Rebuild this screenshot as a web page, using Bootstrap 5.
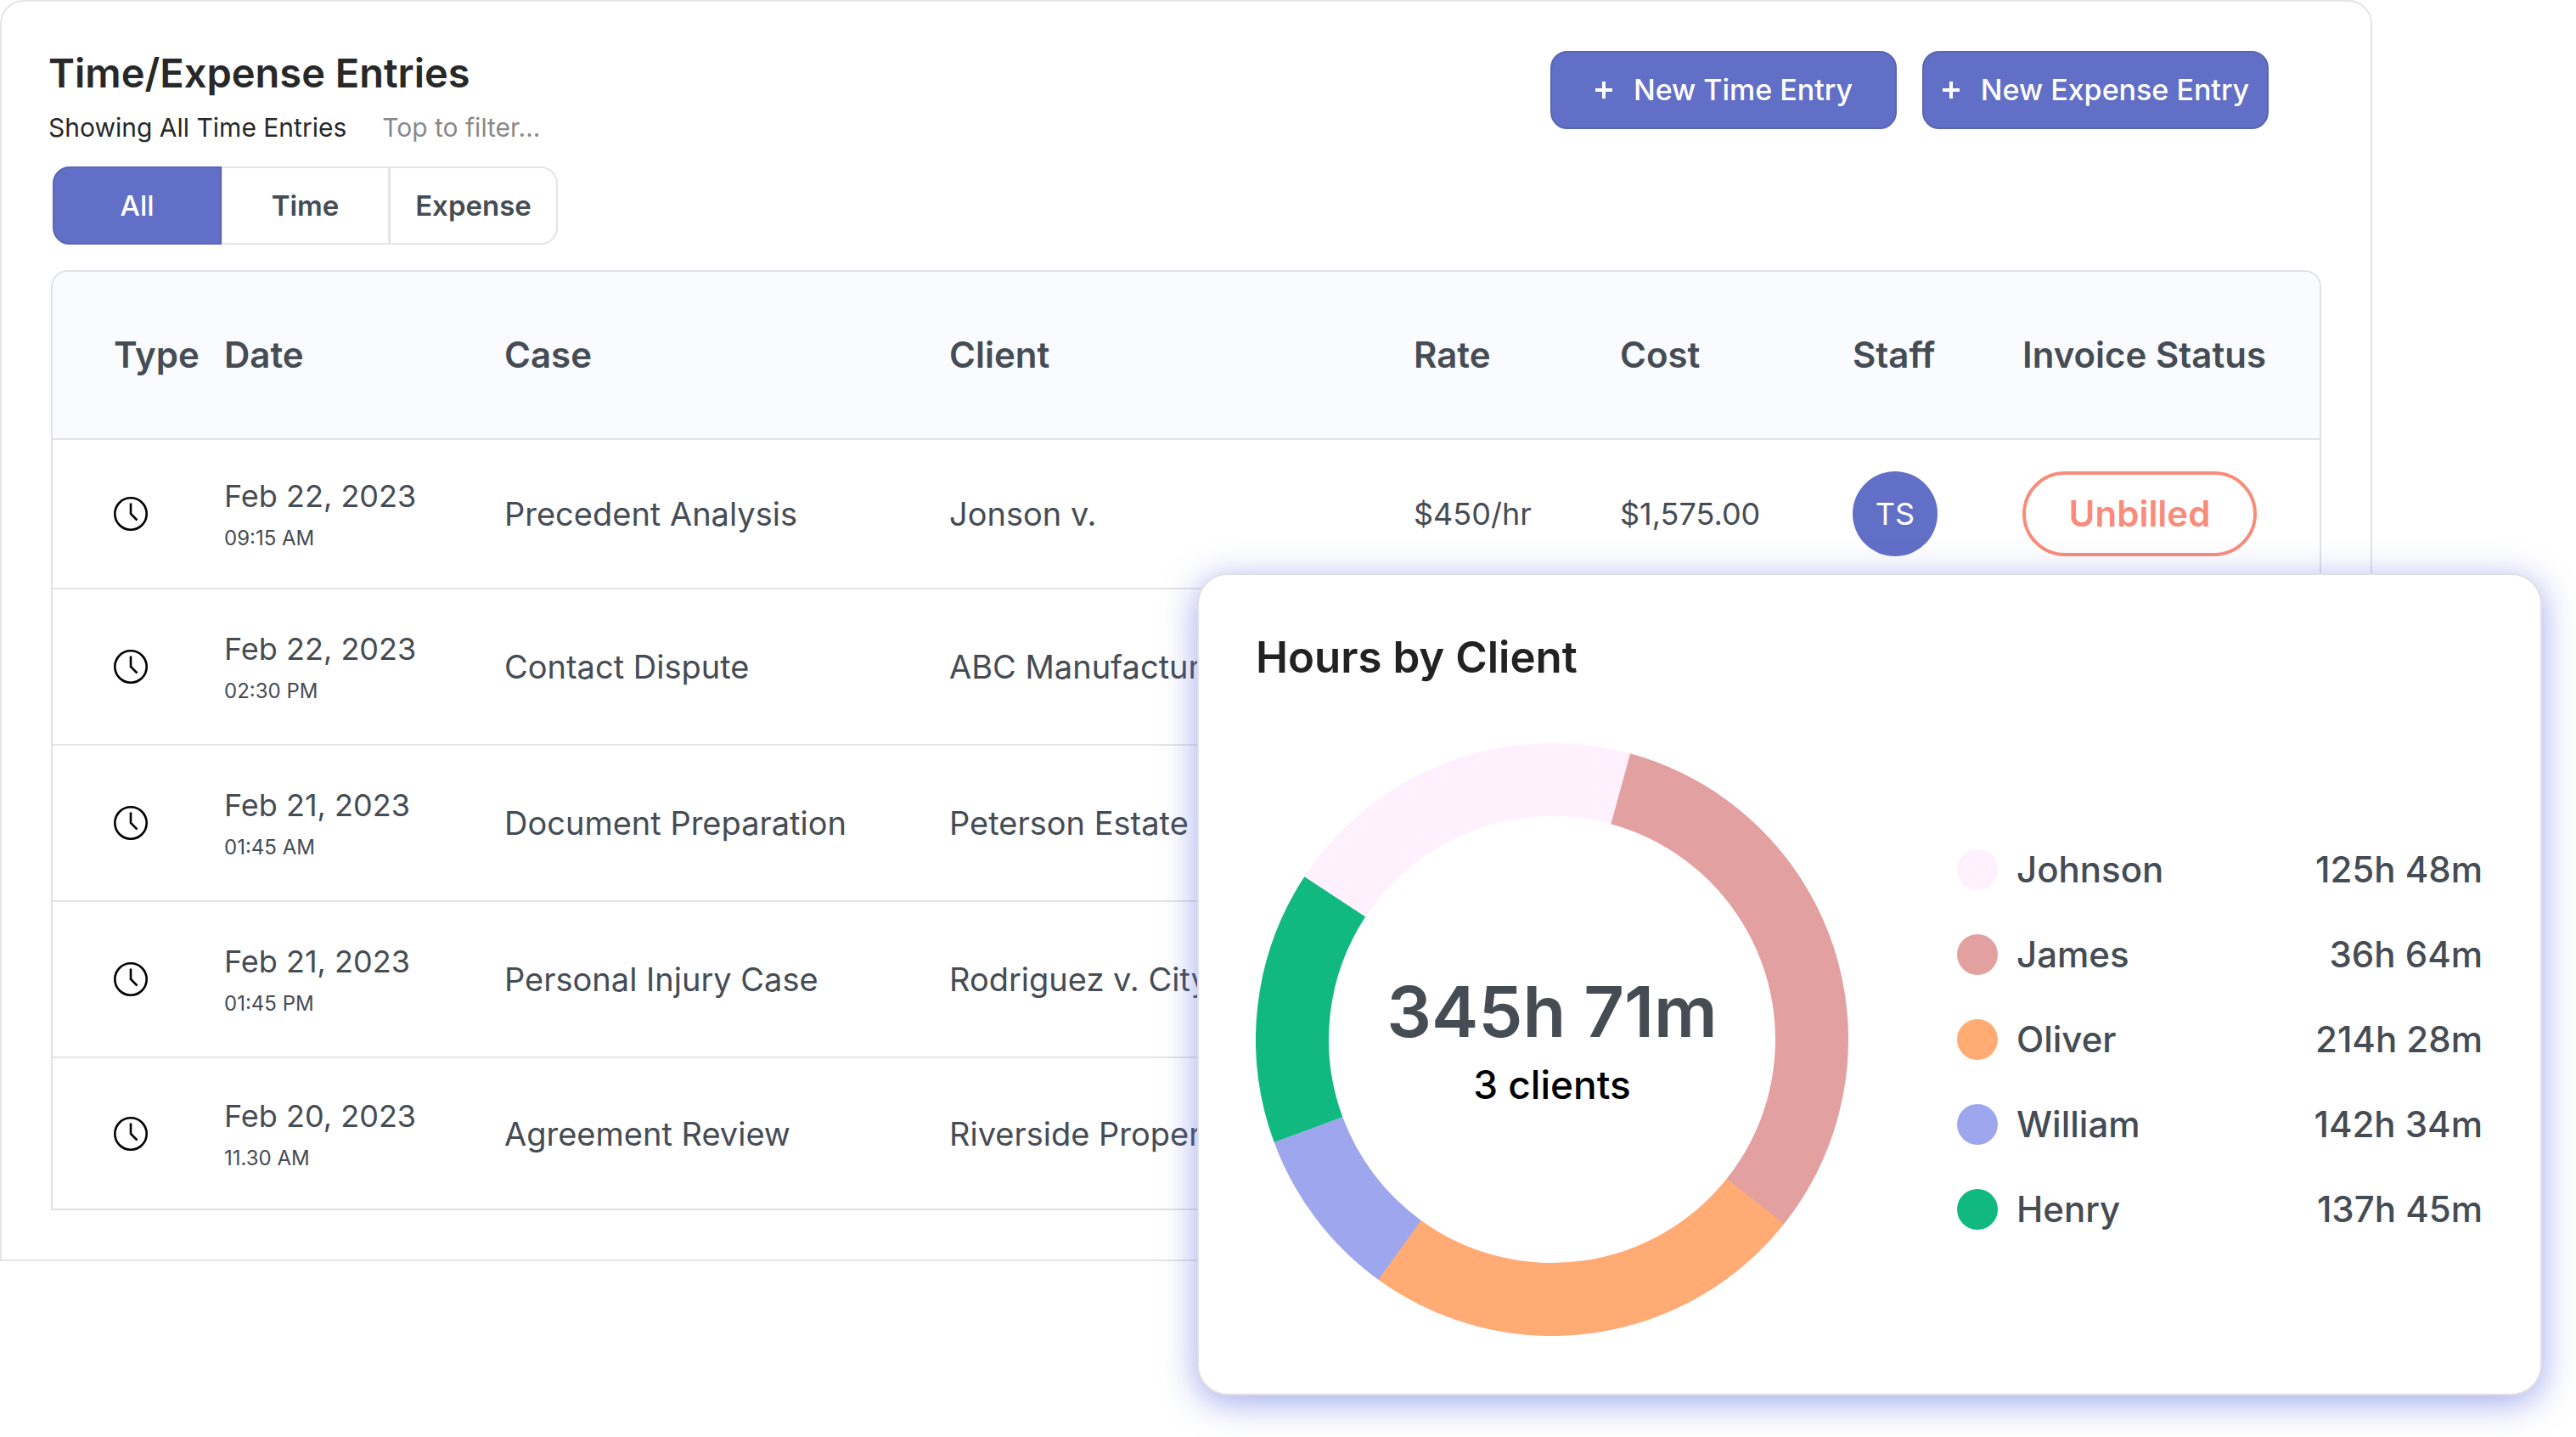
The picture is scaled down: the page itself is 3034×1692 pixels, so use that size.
<!DOCTYPE html>
<html lang="en">
<head>
<meta charset="utf-8">
<meta name="viewport" content="width=device-width, initial-scale=1">
<title>Time/Expense Entries</title>
<link href="https://cdn.jsdelivr.net/npm/bootstrap@5.3.0/dist/css/bootstrap.min.css" rel="stylesheet">
<style>
  :root { --brand: #626fc6; --brand-edge: #5866b4; --ink: #454c54; --line: #e4e4e6; }
  body { font-family: Inter, "Open Sans", sans-serif; color: var(--ink); background: #fff; font-size: 38px; line-height: 48px; }
  .stage { padding-right: 240px; min-height: 100vh; }
  .entries { border: 2px solid var(--line); border-radius: 28px 28px 0 0; padding: 58px 58px 58px 55px; }
  .entries-title { font-size: 47px; line-height: 52px; font-weight: 600; color: #282828; }
  .entries-sub { font-size: 30px; line-height: 36px; color: #282828; gap: 42px; }
  .entries-sub a { color: #888; }
  .entries-actions { gap: 30px; margin-right: 62px; }
  .btn { --bs-btn-font-size: 34px; --bs-btn-line-height: 48px; --bs-btn-font-weight: 500; --bs-btn-border-width: 2px; --bs-btn-border-radius: 20px; --bs-btn-padding-x: 0; --bs-btn-padding-y: 20px; }
  .btn-brand { --bs-btn-color: #fff; --bs-btn-bg: var(--brand); --bs-btn-border-color: var(--brand-edge); --bs-btn-hover-color: #fff; --bs-btn-hover-bg: #5563bd; width: 408px; gap: 24px; }
  .filter { margin: 28px 0 30px 5px; }
  .filter .btn { --bs-btn-font-size: 33px; --bs-btn-font-weight: 600; --bs-btn-color: var(--ink); --bs-btn-border-color: var(--line); --bs-btn-active-color: #fff; --bs-btn-active-bg: var(--brand); --bs-btn-active-border-color: var(--brand-edge); width: 199px; flex: none; }
  .filter .btn.active { font-weight: 500; }
  .grid-box { border: 2px solid #e0e1e6; border-radius: 20px 20px 0 0; overflow: hidden; margin-left: 3px; }
  .entries-table { table-layout: fixed; color: var(--ink); --bs-table-bg: transparent; }
  .entries-table > :not(caption) > * > * { padding: 0; border-bottom: 2px solid var(--line); color: var(--ink); white-space: nowrap; height: 184px; }
  .entries-table > thead > tr > th { height: 197px; font-size: 42px; font-weight: 600; background: #fafbff; vertical-align: middle; }
  .entries-table > tbody > tr:first-child > * { height: 176px; }
  .entries-table > tbody > tr:last-child > * { border-bottom: 0; height: 178px; }
  .entries-table > :not(caption) > tr > :first-child { padding-left: 72px; }
  .c-type { width: 202px; } .c-date { width: 330px; } .c-case { width: 524px; } .c-rate { width: 243px; }
  .c-cost { width: 274px; } .c-staff { width: 200px; } .c-inv { width: 350px; }
  .figures { font-size: 36px; }
  .entry-time { font-size: 24px; line-height: 32px; margin-top: 10px; }
  .clock { width: 40px; height: 40px; display: block; }
  .avatar { width: 100px; height: 100px; background: var(--brand); color: #fff; font-size: 36px; }
  .pill { width: 276px; height: 100px; border: 4px solid #fa8b79; color: #fa8b79; font-size: 42px; font-weight: 600; }
  .hours { top: 675px; right: 40px; width: 1584px; border: 2px solid #e0e0e4; border-radius: 36px; background: #fff; box-shadow: 0 8px 40px rgba(95, 112, 225, .6); padding: 66px 68px 68px 67px; }
  .hours-title { font-size: 51px; line-height: 62px; font-weight: 600; color: #222; margin-bottom: 70px; }
  .donut { width: 698px; height: 698px; }
  .donut svg { display: block; }
  .donut-total { font-size: 83px; line-height: 96px; font-weight: 600; }
  .donut-note { font-size: 46px; line-height: 56px; font-weight: 500; color: #000; margin-top: 10px; }
  .legend-list { width: 619px; gap: 52px; font-size: 42px; font-weight: 500; }
  .legend-dot { width: 48px; height: 48px; margin-right: 22px; }
</style>
</head>
<body>
<div class="stage position-relative">
  <main class="entries">
    <header class="d-flex justify-content-between align-items-start">
      <div>
        <h1 class="entries-title mb-0">Time/Expense Entries</h1>
        <p class="entries-sub d-flex mb-0 mt-3 pt-1"><span>Showing All Time Entries</span><a href="#" class="text-decoration-none">Top to filter...</a></p>
      </div>
      <div class="entries-actions d-flex">
        <button type="button" class="btn btn-brand d-flex justify-content-center align-items-center">
          <svg width="22" height="22" viewBox="0 0 22 22" aria-hidden="true"><path d="M11 1v20M1 11h20" stroke="#fff" stroke-width="4" fill="none"/></svg>
          <span>New Time Entry</span></button>
        <button type="button" class="btn btn-brand d-flex justify-content-center align-items-center">
          <svg width="22" height="22" viewBox="0 0 22 22" aria-hidden="true"><path d="M11 1v20M1 11h20" stroke="#fff" stroke-width="4" fill="none"/></svg>
          <span>New Expense Entry</span></button>
      </div>
    </header>
    <div class="filter btn-group" role="group" aria-label="Entry type">
      <button type="button" class="btn active">All</button>
      <button type="button" class="btn">Time</button>
      <button type="button" class="btn">Expense</button>
    </div>
    <div class="grid-box">
      <table class="table entries-table align-middle mb-0">
        <colgroup><col class="c-type"><col class="c-date"><col class="c-case"><col><col class="c-rate"><col class="c-cost"><col class="c-staff"><col class="c-inv"></colgroup>
        <thead><tr><th>Type</th><th>Date</th><th>Case</th><th>Client</th><th>Rate</th><th>Cost</th><th>Staff</th><th>Invoice Status</th></tr></thead>
        <tbody>
          <tr><td><svg class="clock" viewBox="0 0 40 40" fill="none" stroke="#000" stroke-width="2.6" aria-label="Time"><circle cx="20" cy="20" r="18.7"/><path d="M20 7.500v12.500l7.500 7.500"/></svg></td><td><div class="figures">Feb 22, 2023</div><div class="entry-time">09:15 AM</div></td><td>Precedent Analysis</td><td>Jonson v.</td><td class="figures">$450/hr</td><td class="figures">$1,575.00</td><td><span class="avatar rounded-circle d-flex align-items-center justify-content-center">TS</span></td><td><span class="pill rounded-pill d-flex align-items-center justify-content-center">Unbilled</span></td></tr>
          <tr><td><svg class="clock" viewBox="0 0 40 40" fill="none" stroke="#000" stroke-width="2.6" aria-label="Time"><circle cx="20" cy="20" r="18.7"/><path d="M20 7.500v12.500l7.500 7.500"/></svg></td><td><div class="figures">Feb 22, 2023</div><div class="entry-time">02:30 PM</div></td><td>Contact Dispute</td><td>ABC Manufactur</td><td></td><td></td><td></td><td></td></tr>
          <tr><td><svg class="clock" viewBox="0 0 40 40" fill="none" stroke="#000" stroke-width="2.6" aria-label="Time"><circle cx="20" cy="20" r="18.7"/><path d="M20 7.500v12.500l7.500 7.500"/></svg></td><td><div class="figures">Feb 21, 2023</div><div class="entry-time">01:45 AM</div></td><td>Document Preparation</td><td>Peterson Estate</td><td></td><td></td><td></td><td></td></tr>
          <tr><td><svg class="clock" viewBox="0 0 40 40" fill="none" stroke="#000" stroke-width="2.6" aria-label="Time"><circle cx="20" cy="20" r="18.7"/><path d="M20 7.500v12.500l7.500 7.500"/></svg></td><td><div class="figures">Feb 21, 2023</div><div class="entry-time">01:45 PM</div></td><td>Personal Injury Case</td><td>Rodriguez v. City</td><td></td><td></td><td></td><td></td></tr>
          <tr><td><svg class="clock" viewBox="0 0 40 40" fill="none" stroke="#000" stroke-width="2.6" aria-label="Time"><circle cx="20" cy="20" r="18.7"/><path d="M20 7.500v12.500l7.500 7.500"/></svg></td><td><div class="figures">Feb 20, 2023</div><div class="entry-time">11.30 AM</div></td><td>Agreement Review</td><td>Riverside Proper</td><td></td><td></td><td></td><td></td></tr>
        </tbody>
      </table>
    </div>
  </main>

  <section class="hours position-absolute">
    <h2 class="hours-title">Hours by Client</h2>
    <div class="d-flex justify-content-between align-items-center">
      <div class="donut position-relative">
        <!-- ring segments, clockwise from the top; pathLength 360 makes each dash a number of degrees -->
        <svg width="698" height="698" viewBox="-349 -349 698 698" aria-hidden="true">
          <g fill="none" stroke-width="86" transform="rotate(-90)">
            <circle r="306" pathLength="360" stroke="#fff0fe"/>
            <circle r="306" pathLength="360" stroke="#e3a0a1" stroke-dasharray="113.3 246.7" transform="rotate(15.3)"/>
            <circle r="306" pathLength="360" stroke="#ffab73" stroke-dasharray="87.5 272.5" transform="rotate(128.5)"/>
            <circle r="306" pathLength="360" stroke="#9ea7ed" stroke-dasharray="33.8 326.2" transform="rotate(215.9)"/>
            <circle r="306" pathLength="360" stroke="#11b981" stroke-dasharray="53.6 306.4" transform="rotate(249.7)"/>
          </g>
        </svg>
        <div class="position-absolute top-0 start-0 w-100 h-100 d-flex flex-column align-items-center justify-content-center">
          <div class="donut-total">345h 71m</div>
          <div class="donut-note">3 clients</div>
        </div>
      </div>
      <ul class="legend-list list-unstyled d-flex flex-column mb-0">
        <li class="d-flex align-items-center"><span class="legend-dot rounded-circle" style="background:#fff0fe"></span><span>Johnson</span><span class="ms-auto">125h 48m</span></li>
        <li class="d-flex align-items-center"><span class="legend-dot rounded-circle" style="background:#e3a0a1"></span><span>James</span><span class="ms-auto">36h 64m</span></li>
        <li class="d-flex align-items-center"><span class="legend-dot rounded-circle" style="background:#ffab73"></span><span>Oliver</span><span class="ms-auto">214h 28m</span></li>
        <li class="d-flex align-items-center"><span class="legend-dot rounded-circle" style="background:#9ea7ed"></span><span>William</span><span class="ms-auto">142h 34m</span></li>
        <li class="d-flex align-items-center"><span class="legend-dot rounded-circle" style="background:#11b981"></span><span>Henry</span><span class="ms-auto">137h 45m</span></li>
      </ul>
    </div>
  </section>
</div>
<script src="https://cdn.jsdelivr.net/npm/bootstrap@5.3.0/dist/js/bootstrap.bundle.min.js"></script>
</body>
</html>
